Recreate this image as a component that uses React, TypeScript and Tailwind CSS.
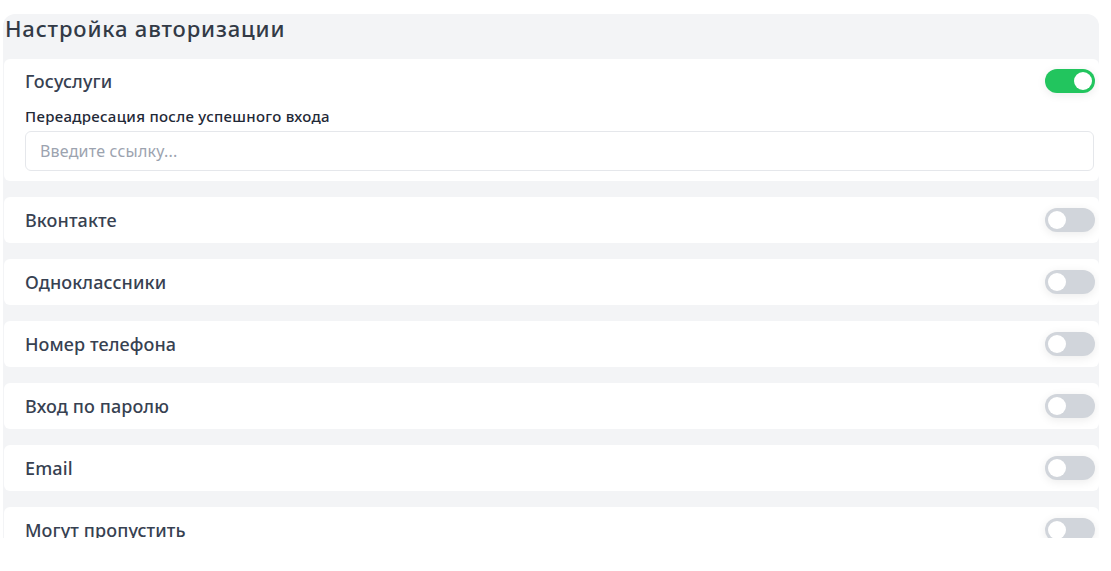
import React from 'react';

const rows = ['Вконтакте', 'Одноклассники', 'Номер телефона', 'Вход по паролю', 'Email', 'Могут пропустить'];

function Toggle({ on }: { on?: boolean }) {
  return (
    <div
      className={`flex h-6 w-[50px] shrink-0 items-center rounded-full px-[3px] shadow-[0_2px_10px_rgba(0,0,0,0.08)] ${
        on ? 'justify-end bg-[#22c55e]' : 'justify-start bg-[#d1d5db]'
      }`}
    >
      <div className="h-[18px] w-[18px] rounded-full bg-white"></div>
    </div>
  );
}

export default function App() {
  return (
    <div className="h-[571px] w-[1111px] bg-white pt-[14px] pl-[3px] font-['Noto_Sans',sans-serif]">
      <div className="h-[524px] w-[1096px] overflow-hidden rounded-t-xl bg-[#f3f4f6] pl-px">
        <h2 className="pl-[1px] pt-[1px] text-[22px] leading-[26px] font-medium tracking-[0.85px] text-[#323a46]">Настройка авторизации</h2>

        <div className="mt-[18px] flex flex-col gap-4">
          {/* Госуслуги */}
          <div className="rounded-md bg-white pl-[21px] pr-[4px] pt-[10px] pb-[10px]">
            <div className="flex items-center justify-between">
              <span className="text-[18px] leading-6 font-medium tracking-[0.1px] text-[#374151]">Госуслуги</span>
              <Toggle on />
            </div>
            <div className="mt-[13px] pr-px text-[15px] leading-5 font-medium tracking-[0.3px] text-[#1f2937]">Переадресация после успешного входа</div>
            <div className="mt-[5px] mr-px flex h-10 items-center rounded-md border border-[#e5e7eb] px-[14px] text-[16px] tracking-[0.2px] text-[#9ca3af]">
              Введите ссылку...
            </div>
          </div>

          {rows.map((r) => (
            <div key={r} className="flex h-[46px] items-center justify-between rounded-md bg-white pl-[21px] pr-[4px]">
              <span className="text-[18px] font-medium tracking-[0.1px] text-[#374151]">{r}</span>
              <Toggle />
            </div>
          ))}
        </div>
      </div>
    </div>
  );
}
